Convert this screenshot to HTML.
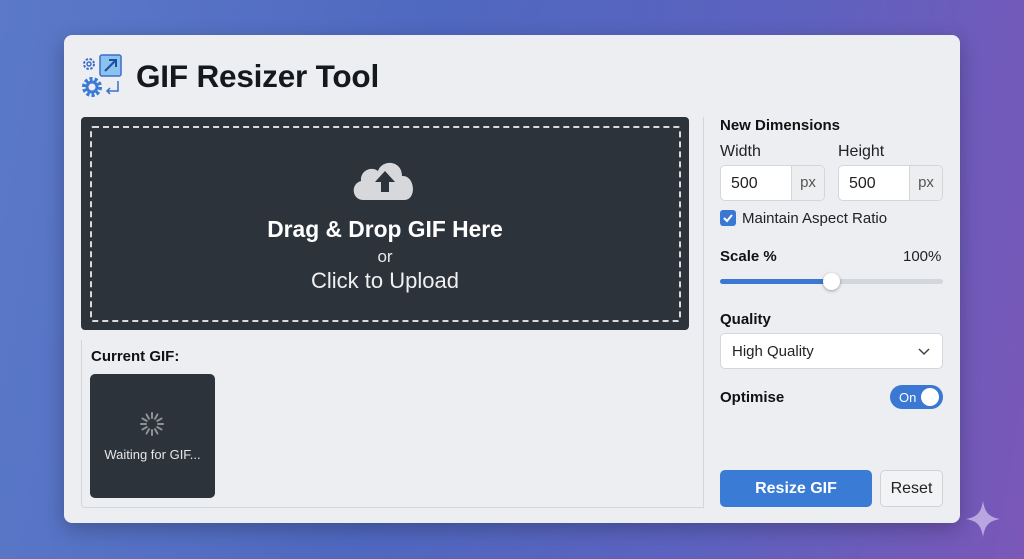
<!DOCTYPE html>
<html><head><style>
*{box-sizing:border-box;margin:0;padding:0}
body{width:1024px;height:559px;overflow:hidden;font-family:"Liberation Sans",sans-serif;background:linear-gradient(100deg,#5b79c8 0%,#4f68c0 40%,#5c62bf 70%,#7a57b8 100%);position:relative}
.card{position:absolute;left:64px;top:35px;width:896px;height:488px;background:#eceef1;border-radius:8px;box-shadow:0 6px 20px rgba(0,0,0,.25)}
.abs{position:absolute}
h1{position:absolute;left:136px;top:58px;font-size:31.5px;font-weight:bold;color:#15181d;letter-spacing:-.2px}
.drop{left:81px;top:117px;width:608px;height:213px;background:#2d333b;border-radius:4px}
.dash{left:90px;top:126px;width:591px;height:196px;border:2px dashed #d8dadd;border-radius:3px}
.t{color:#111;font-size:15px}
.inp{position:absolute;height:36px;background:#fff;border:1px solid #d3d6da;border-radius:5px;overflow:hidden}
.inp span{position:absolute;left:10px;top:9px;font-size:16px;color:#222}
.inp i{position:absolute;right:0;top:0;width:50px;height:34px;background:#eceef0;border-left:1px solid #d3d6da;font-style:normal;color:#555;font-size:15px;text-align:center;line-height:34px}
</style></head><body>
<div class="card"></div>
<svg class="abs" style="left:78px;top:53px" width="46" height="46" viewBox="0 0 46 46">
<circle cx="11" cy="11" r="5" fill="none" stroke="#3b6fc9" stroke-width="2" stroke-dasharray="2.5 1.5"/><circle cx="11" cy="11" r="2" fill="none" stroke="#3b6fc9" stroke-width="1.5"/>
<rect x="22" y="2" width="21" height="21" rx="2" fill="#8cc2ee" stroke="#3b6fc9" stroke-width="1.5"/><path d="M27 18 L38 7 M31 7h7v7" stroke="#1d4f9c" stroke-width="2" fill="none"/>
<circle cx="14" cy="34" r="8" fill="none" stroke="#3b7ad6" stroke-width="4" stroke-dasharray="3 2"/><circle cx="14" cy="34" r="5" fill="none" stroke="#3b7ad6" stroke-width="3"/>
<path d="M40 28v10h-11M32 35l-3 3 3 3" stroke="#3b6fc9" stroke-width="1.5" fill="none"/></svg>
<h1>GIF Resizer Tool</h1>
<div class="abs drop"></div><div class="abs dash"></div>
<svg class="abs" style="left:349px;top:154px" width="72" height="48" viewBox="0 0 72 48"><path d="M14 46 C3 46 1 30 12 27 C11 16 23 12 29 17 C33 5 53 6 53 22 C66 21 68 45 56 46 Z" fill="#d6d8db"/><path d="M36 17 L26 28 H32 V38 H40 V28 H46 Z" fill="#2d333b"/></svg>
<div class="abs" style="left:81px;width:608px;top:216px;text-align:center;color:#fff;font-size:22.8px;font-weight:bold">Drag &amp; Drop GIF Here</div>
<div class="abs" style="left:81px;width:608px;top:247px;text-align:center;color:#e8e8e8;font-size:17px">or</div>
<div class="abs" style="left:81px;width:608px;top:268px;text-align:center;color:#f0f0f0;font-size:22px">Click to Upload</div>
<div class="abs" style="left:81px;top:340px;width:622px;height:168px;border-left:1px solid #d3d6da;border-bottom:1px solid #d3d6da;border-radius:0 0 0 4px"></div>
<div class="abs" style="left:703px;top:117px;width:1px;height:391px;background:#d3d6da"></div>
<div class="abs t" style="left:91px;top:348px;font-weight:bold">Current GIF:</div>
<div class="abs" style="left:90px;top:374px;width:125px;height:124px;background:#2d333b;border-radius:5px"></div>
<svg class="abs" style="left:138px;top:410px" width="28" height="28" viewBox="-14 -14 28 28" stroke="#8d9298" stroke-width="2" stroke-linecap="round">
<g id="s"><line x1="0" y1="-6" x2="0" y2="-11"/></g><use href="#s" transform="rotate(30)"/><use href="#s" transform="rotate(60)"/><use href="#s" transform="rotate(90)"/><use href="#s" transform="rotate(120)"/><use href="#s" transform="rotate(150)"/><use href="#s" transform="rotate(180)"/><use href="#s" transform="rotate(210)"/><use href="#s" transform="rotate(240)"/><use href="#s" transform="rotate(270)"/><use href="#s" transform="rotate(300)"/><use href="#s" transform="rotate(330)"/></svg>
<div class="abs" style="left:90px;width:125px;top:447px;text-align:center;color:#e6e6e6;font-size:13px">Waiting for GIF...</div>

<div class="abs t" style="left:720px;top:117px;font-weight:bold">New Dimensions</div>
<div class="abs t" style="left:720px;top:143px;font-size:16px;color:#222">Width</div>
<div class="abs t" style="left:838px;top:143px;font-size:16px;color:#222">Height</div>
<div class="inp" style="left:720px;top:165px;width:105px"><span>500</span><i style="width:33px">px</i></div>
<div class="inp" style="left:838px;top:165px;width:105px"><span>500</span><i style="width:33px">px</i></div>
<div class="abs" style="left:720px;top:210px;width:16px;height:16px;background:#3a78d4;border-radius:3px"><svg width="16" height="16"><path d="M4 8l3 3 5-6" stroke="#fff" stroke-width="2" fill="none"/></svg></div>
<div class="abs t" style="left:742px;top:210px;color:#222">Maintain Aspect Ratio</div>
<div class="abs t" style="left:720px;top:248px;font-weight:bold">Scale %</div>
<div class="abs t" style="left:903px;top:248px;color:#222">100%</div>
<div class="abs" style="left:720px;top:279px;width:223px;height:5px;border-radius:3px;background:#d3d6da"></div>
<div class="abs" style="left:720px;top:279px;width:112px;height:5px;border-radius:3px;background:#3a78d4"></div>
<div class="abs" style="left:823px;top:273px;width:17px;height:17px;border-radius:50%;background:#fff;box-shadow:0 1px 3px rgba(0,0,0,.35)"></div>
<div class="abs t" style="left:720px;top:311px;font-weight:bold">Quality</div>
<div class="inp" style="left:720px;top:333px;width:223px"><span style="left:11px;font-size:15px">High Quality</span><svg class="abs" style="right:12px;top:14px" width="12" height="8"><path d="M1 1l5 5 5-5" stroke="#444" stroke-width="1.5" fill="none"/></svg></div>
<div class="abs t" style="left:720px;top:389px;font-weight:bold">Optimise</div>
<div class="abs" style="left:890px;top:385px;width:53px;height:24px;border-radius:12px;background:#3a78d4"><span class="abs" style="left:9px;top:5px;color:#fff;font-size:13px">On</span><div class="abs" style="left:31px;top:3px;width:18px;height:18px;border-radius:50%;background:#fff"></div></div>
<div class="abs" style="left:720px;top:470px;width:152px;height:37px;background:#3a7bd5;border-radius:5px;color:#fff;font-size:16px;font-weight:bold;text-align:center;line-height:37px">Resize GIF</div>
<div class="abs" style="left:880px;top:470px;width:63px;height:37px;background:#f2f3f5;border:1px solid #cfd2d6;border-radius:5px;color:#222;font-size:16px;text-align:center;line-height:35px">Reset</div>
<svg class="abs" style="left:965px;top:500px" width="36" height="38" viewBox="0 0 36 38"><path d="M18 1 C20 13 24 17 35 19 C24 21 20 25 18 37 C16 25 12 21 1 19 C12 17 16 13 18 1Z" fill="#b9a6e0"/></svg>
</body></html>
